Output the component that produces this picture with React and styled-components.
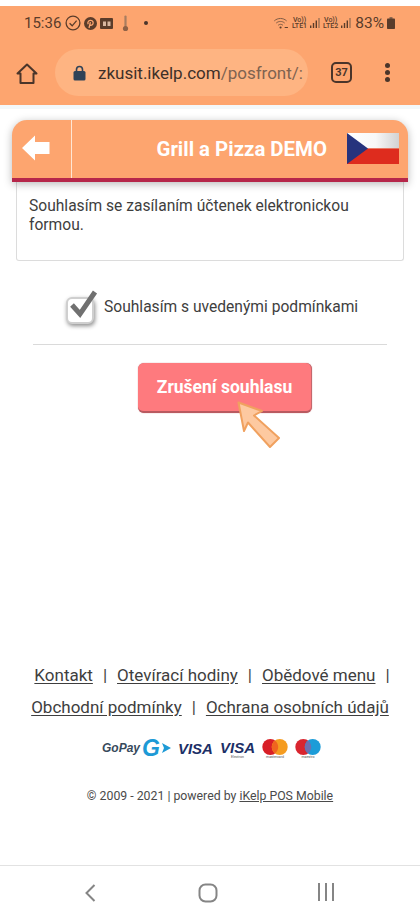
import React from "react";
import styled, { createGlobalStyle } from "styled-components";

const Global = createGlobalStyle`
    html, body { margin: 0; padding: 0; background: #fff; }
    body { font-family: Roboto, "Liberation Sans", sans-serif; color: #3c3c3c; }
    * { box-sizing: border-box; }
`;

const Page = styled.div`
    width: 420px;
    height: 920px;
    display: flex;
    flex-direction: column;
    background: #fff;
    overflow: hidden;
`;

const Browser = styled.header`
    margin-top: 6px;
    height: 99px;
    background: #fda56f;
    flex: none;
`;

const BlueLine = styled.div`
    height: 4px;
    background: #f3f8fb;
    flex: none;
`;

const StatusBar = styled.div`
    height: 34px;
    padding: 0 25px 0 24px;
    display: flex;
    align-items: center;
    justify-content: space-between;
    color: #5a3c2a;
`;

const StatusGroup = styled.div`
    display: flex;
    align-items: center;
    gap: ${p => p.$gap || 3}px;
`;

const Clock = styled.span`
    font-size: 15px;
    margin-right: 1px;
`;

const Percent = styled.span`
    font-size: 15.5px;
    margin-left: 1px;
`;

const Lte = styled.span`
    font-size: 7px;
    line-height: 6.5px;
    font-weight: 500;
    text-align: center;
    display: block;
`;

const AddressRow = styled.div`
    height: 55px;
    padding: 9px 14px 0 16px;
    display: flex;
    align-items: flex-start;
`;

const AddressPill = styled.div`
    width: 253px;
    height: 47px;
    margin-left: 17px;
    padding-left: 18px;
    border-radius: 24px;
    background: #feb482;
    display: flex;
    align-items: center;
    gap: 12px;
    font-size: 17px;
    white-space: nowrap;
`;

const Host = styled.span`
    color: #3d3029;
`;

const Path = styled.span`
    color: #7f6350;
`;

const TabCount = styled.div`
    width: 21px;
    height: 21px;
    margin: 13px 0 0 23px;
    border: 2px solid #4a352a;
    border-radius: 5px;
    font-size: 11px;
    font-weight: 700;
    color: #4a352a;
    display: flex;
    align-items: center;
    justify-content: center;
    flex: none;
`;

const MenuDots = styled.div`
    margin: 14px 0 0 33px;
    display: flex;
    flex-direction: column;
    gap: 2px;
    flex: none;
`;

const Dot = styled.i`
    width: 5px;
    height: 5px;
    border-radius: 50%;
    background: #4a352a;
    display: block;
`;

const StatusDot = styled(Dot)`
    width: 4px;
    height: 4px;
    margin-left: 6px;
`;

const Main = styled.main`
    flex: 1;
    padding: 11px 12px 0;
    display: flex;
    flex-direction: column;
`;

const CardHeader = styled.div`
    height: 62px;
    background: #fda56f;
    border-radius: 15px 15px 0 0;
    border-bottom: 4px solid #b6274a;
    box-shadow: 0 2px 9px rgba(0, 0, 0, 0.28);
    display: flex;
    position: relative;
    z-index: 1;
    color: #fff;
`;

const BackCell = styled.div`
    width: 60px;
    height: 58px;
    border-right: 1px solid #ffe6d4;
    display: flex;
    align-items: center;
    padding: 0 0 2px 10px;
    flex: none;
`;

const Title = styled.div`
    flex: 1;
    padding: 0 20px 2px 0;
    text-align: right;
    font-size: 20.4px;
    font-weight: 700;
    line-height: 58px;
    white-space: nowrap;
`;

const FlagWrap = styled.div`
    width: 52px;
    margin: 13px 9px 0 0;
    flex: none;
`;

const TextBox = styled.div`
    margin: 0 4px;
    height: 79px;
    padding: 15px 12px 0;
    border: 1px solid #dcdcdc;
    border-top: 0;
    border-radius: 0 0 3px 3px;
    font-size: 15.6px;
    line-height: 19px;
    color: #3e3e3e;
`;

const ConsentRow = styled.label`
    margin-top: 28px;
    padding-left: 53px;
    display: flex;
    align-items: center;
    gap: 6px;
    font-size: 15.6px;
    color: #3e3e3e;
    white-space: nowrap;
`;

const CheckBox = styled.div`
    width: 33px;
    height: 36px;
    position: relative;
    flex: none;
`;

const CheckFrame = styled.div`
    position: absolute;
    left: 1px;
    top: 8px;
    width: 28px;
    height: 27px;
    background: #fff;
    border: 2px solid #cfcfcf;
    border-radius: 6px;
    box-shadow: 1px 2px 4px rgba(0, 0, 0, 0.45);
`;

const CheckMark = styled.svg`
    position: absolute;
    left: 3px;
    top: 0;
`;

const Divider = styled.hr`
    margin: 19px 21px 0;
    border: 0;
    border-top: 1px solid #dadada;
`;

const ButtonRow = styled.div`
    margin-top: 18px;
    display: flex;
    justify-content: center;
    position: relative;
`;

const CancelButton = styled.button`
    width: 174px;
    height: 50px;
    margin-left: 30px;
    border: 0;
    border-bottom: 2px solid #b95a60;
    border-right: 1px solid #c5676c;
    border-radius: 6px;
    background: #fe7a7e;
    box-shadow: 0 0 1px #b95a60;
    color: #fff;
    font-family: inherit;
    font-size: 17.5px;
    font-weight: 700;
    padding: 0 0 1px;
`;

const Pointer = styled.svg`
    position: absolute;
    left: 225px;
    top: 38px;
`;

const Footer = styled.footer`
    height: 206px;
    flex: none;
    text-align: center;
`;

const LinkRow = styled.div`
    display: flex;
    justify-content: center;
    height: 32px;
    padding-left: ${p => p.$indent || 0}px;
    align-items: center;
    gap: 10px;
    font-size: 17px;
    color: #3e3e3e;
    white-space: nowrap;
`;

const FooterLink = styled.a`
    text-decoration: underline;
    text-underline-offset: 2px;
    color: #3e3e3e;
`;

const PayRow = styled.div`
    height: 24px;
    margin-top: 13px;
    padding-left: 3px;
    display: flex;
    align-items: center;
    justify-content: center;
    gap: 7px;
`;

const GoPay = styled.span`
    font-family: "Liberation Sans", sans-serif;
    font-style: italic;
    font-weight: 700;
    font-size: 12px;
    color: #374a5c;
    display: flex;
    align-items: center;
    gap: 2px;
`;

const BigG = styled.span`
    font-size: 23px;
    color: #1d9ad6;
    line-height: 20px;
`;

const Visa = styled.span`
    font-family: "Liberation Sans", sans-serif;
    font-style: italic;
    font-weight: 700;
    font-size: 15px;
    line-height: 15px;
    color: #1c2f66;
    display: block;
    text-align: center;
`;

const CardName = styled.span`
    display: block;
    font-size: 3.5px;
    line-height: 4px;
    color: #555;
    text-align: center;
`;

const VisaCell = styled.div`
    height: 22px;
    display: flex;
    flex-direction: column;
    justify-content: ${p => (p.$sub ? "flex-end" : "center")};
`;

const Rings = styled.div`
    width: 26px;
    height: 20px;
`;

const Copyright = styled.div`
    margin-top: 29px;
    font-size: 12.3px;
    color: #4a4a4a;
`;

const CopyLink = styled.a`
    text-decoration: underline;
`;

const NavBar = styled.nav`
    height: 55px;
    flex: none;
    border-top: 1px solid #e2e2e2;
    background: #fff;
    display: flex;
    align-items: flex-start;
    padding: 17px 0 0 31px;
`;

const NavSlot = styled.div`
    width: 118px;
    display: flex;
    justify-content: center;
`;

const Home = () => (
    <svg width="22" height="21" viewBox="0 0 22 21" fill="none" stroke="#4a352a" strokeWidth="2" strokeLinejoin="round" style={{ flex: "none", marginTop: 14 }}>
        <path d="M1.5 10.5 11 1.5l9.5 9h-3V20h-13v-9.5z" />
    </svg>
);

const Lock = () => (
    <svg width="13" height="16" viewBox="0 0 13 16" style={{ flex: "none" }}>
        <path d="M3.5 7V4.5a3 3 0 0 1 6 0V7" fill="none" stroke="#2f4257" strokeWidth="1.6" />
        <rect x="0.5" y="6" width="12" height="9.5" rx="1.5" fill="#2f4257" />
    </svg>
);

const CheckCircle = () => (
    <svg width="16" height="16" viewBox="0 0 16 16" fill="none" stroke="#5a3c2a" strokeWidth="1.3">
        <circle cx="8" cy="8" r="6.9" />
        <path d="M4.6 8.2 7.2 10.8 11.6 5.6" />
    </svg>
);

const Pinterest = () => (
    <svg width="13" height="13" viewBox="0 0 13 13">
        <circle cx="6.5" cy="6.5" r="6.5" fill="#5a3c2a" />
        <path d="M5 11 6.4 5.2M4.2 7.2C3 4.8 5 3.2 6.8 3.4c2 .2 2.8 2 2.1 3.6-.6 1.4-2.2 1.6-2.9.6" fill="none" stroke="#fda56f" strokeWidth="1.3" />
    </svg>
);

const Calendar = () => (
    <svg width="13" height="11" viewBox="0 0 13 11">
        <rect width="13" height="11" rx="1" fill="#5a3c2a" />
        <rect x="3" y="3.5" width="3" height="4.5" fill="#d8b7a0" />
        <rect x="7.5" y="3.5" width="3" height="4.5" fill="#d8b7a0" />
    </svg>
);

const Thermometer = () => (
    <svg width="7" height="17" viewBox="0 0 7 17">
        <rect x="2.4" y="0.5" width="2.2" height="12" rx="1.1" fill="#a87d60" />
        <circle cx="3.5" cy="13.5" r="2.6" fill="#8f6247" />
    </svg>
);

const Wifi = () => (
    <svg width="16" height="13" viewBox="0 0 14 12" fill="none" stroke="#7d5a44" strokeWidth="0.9">
        <path d="M.8 3.6C4 .6 9 .6 12.2 3.6M2.6 5.6c2.2-2 5.6-2 7.8 0M4.4 7.6c1.4-1.1 3-1.1 4.4 0" />
        <circle cx="6.6" cy="9.7" r="1" fill="#5a3c2a" stroke="none" />
        <path d="M10.4 9.7h3" stroke="#5a3c2a" />
    </svg>
);

const Bars = () => (
    <svg width="10" height="10" viewBox="0 0 10 10" fill="#5a3c2a">
        <rect x="0" y="7.5" width="1.4" height="2.5" />
        <rect x="2.8" y="5" width="1.4" height="5" />
        <rect x="5.6" y="2.5" width="1.4" height="7.5" />
        <rect x="8.4" y="0" width="1.2" height="10" fill="#8d6a52" />
    </svg>
);

const Battery = () => (
    <svg width="8" height="12" viewBox="0 0 8 12" fill="#5a3c2a">
        <rect x="2.5" width="3" height="2" fill="#8d6a52" />
        <rect y="1.5" width="8" height="10.5" rx="0.8" />
    </svg>
);

const VoLte = ({ n }) => (
    <Lte>Vo))<br />LTE{n}</Lte>
);

const BackArrow = () => (
    <svg width="28" height="26" viewBox="0 0 28 26" fill="#fff">
        <path d="M0 13 13 .5V7h14.5v12H13v6.5z" />
    </svg>
);

const CzechFlag = () => (
    <svg width="52" height="31" viewBox="0 0 52 31">
        <defs>
            <linearGradient id="flagWhite" x1="0" x2="1" y1="0" y2="0">
                <stop offset="0" stopColor="#ffffff" />
                <stop offset="0.55" stopColor="#f8f8f8" />
                <stop offset="1" stopColor="#d2d2d2" />
            </linearGradient>
        </defs>
        <rect width="52" height="15.5" fill="url(#flagWhite)" />
        <rect y="15.5" width="52" height="15.5" fill="#de2c1e" />
        <path d="M0 0 21 15.5 0 31z" fill="#26337d" />
    </svg>
);

const Pay = () => (
    <PayRow>
        <GoPay>
            GoPay
            <BigG>G</BigG>
            <svg width="9" height="10" viewBox="0 0 9 10"><path d="M0 0 9 5 0 10 2 5z" fill="#1d9ad6" /></svg>
        </GoPay>
        <VisaCell><Visa>VISA</Visa></VisaCell>
        <VisaCell $sub><Visa>VISA</Visa><CardName>Electron</CardName></VisaCell>
        <VisaCell $sub>
            <Rings>
                <svg width="26" height="16" viewBox="0 0 27 17" style={{ display: "block" }}>
                    <circle cx="8.5" cy="8.5" r="8.5" fill="#d81e26" />
                    <circle cx="18.5" cy="8.5" r="8.5" fill="#f59c20" />
                    <path d="M13.5 1.7a8.5 8.5 0 0 1 0 13.6 8.5 8.5 0 0 1 0-13.6z" fill="#f0641f" />
                </svg>
                <CardName>mastercard</CardName>
            </Rings>
        </VisaCell>
        <VisaCell $sub>
            <Rings>
                <svg width="26" height="16" viewBox="0 0 27 17" style={{ display: "block" }}>
                    <circle cx="8.5" cy="8.5" r="8.5" fill="#d9252f" />
                    <circle cx="18.5" cy="8.5" r="8.5" fill="#1c9cd8" />
                    <path d="M13.5 1.7a8.5 8.5 0 0 1 0 13.6 8.5 8.5 0 0 1 0-13.6z" fill="#6f6fb0" />
                </svg>
                <CardName>maestro</CardName>
            </Rings>
        </VisaCell>
    </PayRow>
);

export default function App() {
    return (
        <Page>
            <Global />
            <Browser>
                <StatusBar>
                    <StatusGroup>
                        <Clock>15:36</Clock>
                        <CheckCircle />
                        <Pinterest />
                        <StatusGroup $gap={9}>
                            <Calendar />
                            <Thermometer />
                            <StatusDot />
                        </StatusGroup>
                    </StatusGroup>
                    <StatusGroup $gap={3}>
                        <Wifi />
                        <VoLte n="1" />
                        <Bars />
                        <VoLte n="2" />
                        <Bars />
                        <Percent>83%</Percent>
                        <Battery />
                    </StatusGroup>
                </StatusBar>
                <AddressRow>
                    <Home />
                    <AddressPill>
                        <Lock />
                        <span><Host>zkusit.ikelp.com</Host><Path>/posfront/:</Path></span>
                    </AddressPill>
                    <TabCount>37</TabCount>
                    <MenuDots><Dot /><Dot /><Dot /></MenuDots>
                </AddressRow>
            </Browser>
            <BlueLine />
            <Main>
                <CardHeader>
                    <BackCell><BackArrow /></BackCell>
                    <Title>Grill a Pizza DEMO</Title>
                    <FlagWrap><CzechFlag /></FlagWrap>
                </CardHeader>
                <TextBox>Souhlasím se zasílaním účtenek elektronickou formou.</TextBox>
                <ConsentRow>
                    <CheckBox>
                        <CheckFrame />
                        <CheckMark width="32" height="30" viewBox="0 0 32 30" fill="none" stroke="#707070" strokeWidth="5">
                            <path d="M4 16 12 25 27 3" />
                        </CheckMark>
                    </CheckBox>
                    Souhlasím s uvedenými podmínkami
                </ConsentRow>
                <Divider />
                <ButtonRow>
                    <CancelButton>Zrušení souhlasu</CancelButton>
                    <Pointer width="44" height="50" viewBox="0 0 44 50">
                        <path d="M1.5 1.5 25 10 17 14.5 42 37 33 46 11 21.5 7 30z" fill="#fdc9a0" stroke="#f0a15f" strokeWidth="2" strokeLinejoin="round" />
                    </Pointer>
                </ButtonRow>
            </Main>
            <Footer>
                <LinkRow $indent={4}>
                    <FooterLink>Kontakt</FooterLink>|
                    <FooterLink>Otevírací hodiny</FooterLink>|
                    <FooterLink>Obědové menu</FooterLink>|
                </LinkRow>
                <LinkRow>
                    <FooterLink>Obchodní podmínky</FooterLink>|
                    <FooterLink>Ochrana osobních údajů</FooterLink>
                </LinkRow>
                <Pay />
                <Copyright>© 2009 - 2021 | powered by <CopyLink>iKelp POS Mobile</CopyLink></Copyright>
            </Footer>
            <NavBar>
                <NavSlot>
                    <svg width="12" height="20" viewBox="0 0 12 20" fill="none" stroke="#858585" strokeWidth="2"><path d="M10.5 2 2.5 10l8 8" /></svg>
                </NavSlot>
                <NavSlot>
                    <svg width="20" height="20" viewBox="0 0 20 20" fill="none" stroke="#858585" strokeWidth="2"><rect x="1.5" y="1.5" width="17" height="17" rx="6" /></svg>
                </NavSlot>
                <NavSlot>
                    <svg width="18" height="18" viewBox="0 0 18 18" stroke="#858585" strokeWidth="2"><path d="M2 0v18M9 0v18M16 0v18" /></svg>
                </NavSlot>
            </NavBar>
        </Page>
    );
}
